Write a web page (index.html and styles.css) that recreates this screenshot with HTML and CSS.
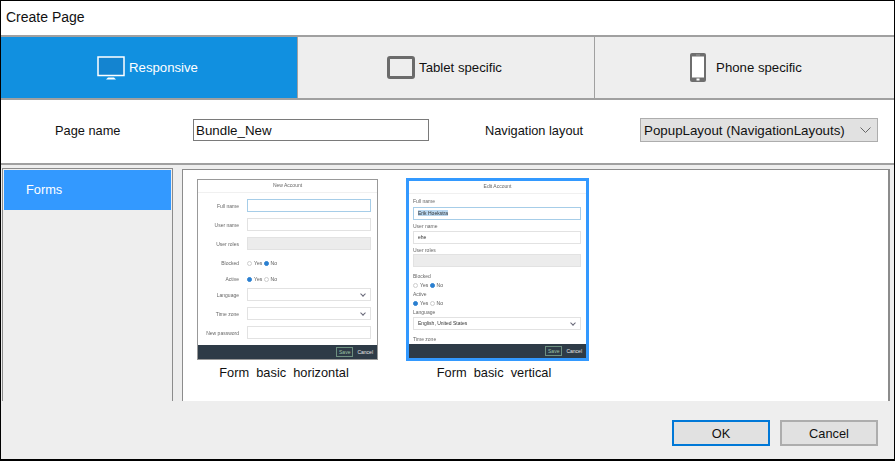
FILE: index.html
```html
<!DOCTYPE html>
<html lang="en">
  <head>
    <meta charset="UTF-8" />
    <meta name="viewport" content="width=device-width, initial-scale=1.0" />
    <title>Create Page</title>
    <link rel="stylesheet" href="styles.css">
  </head>
  <body>
    <div class="dialog">
      <div class="title-bar">Create Page</div>

      <div class="tabs">
        <div class="tab tab-active">
          <svg class="tab-icon" width="28" height="24" viewBox="0 0 28 24">
            <rect x="1" y="1" width="26" height="18.5" fill="#1484d0" stroke="#fff" stroke-width="1.5" />
            <path d="M11 21.5h6l2 2H9z" fill="#fff" />
          </svg>
          <span>Responsive</span>
        </div>
        <div class="tab tab-tablet">
          <svg class="tab-icon" width="28" height="23" viewBox="0 0 28 23">
            <rect x="1.5" y="1.5" width="25" height="20" rx="1.5" fill="none" stroke="#6b6b6b" stroke-width="3" />
          </svg>
          <span>Tablet specific</span>
        </div>
        <div class="tab tab-phone">
          <svg class="tab-icon" width="16" height="29" viewBox="0 0 16 29">
            <rect width="16" height="29" rx="2" fill="#6e6e6e" />
            <rect x="2" y="3.5" width="12" height="21" fill="#fff" />
            <rect x="6" y="1.5" width="4" height="1" fill="#999" />
            <rect x="6.5" y="25.5" width="3" height="2" fill="#fff" />
          </svg>
          <span>Phone specific</span>
        </div>
      </div>

      <div class="name-row">
        <label class="name-label" for="pageName">Page name</label>
        <input class="name-input" id="pageName" type="text" value="Bundle_New" />
        <span class="nav-label">Navigation layout</span>
        <div class="nav-select">
          <span>PopupLayout (NavigationLayouts)</span>
          <svg width="11" height="6" viewBox="0 0 11 6"><path d="M.5.5l5 5 5-5" fill="none" stroke="#666" /></svg>
        </div>
      </div>

      <div class="content">
        <div class="side-list">
          <div class="side-item">Forms</div>
        </div>
        <div class="templates">
          <div class="template">
            <div class="thumb thumb-horizontal">
              <div class="thumb-title">New Account</div>
              <div class="h-form">
                <div class="h-row"><span>Full name</span><i class="fld fld-focus"></i></div>
                <div class="h-row"><span>User name</span><i class="fld"></i></div>
                <div class="h-row"><span>User roles</span><i class="fld fld-off"></i></div>
                <div class="h-row h-radio"><span>Blocked</span><em><b class="dot"></b>Yes <b class="dot dot-on"></b>No</em></div>
                <div class="h-row h-radio"><span>Active</span><em><b class="dot dot-on"></b>Yes <b class="dot"></b>No</em></div>
                <div class="h-row"><span>Language</span><i class="fld fld-drop"></i></div>
                <div class="h-row"><span>Time zone</span><i class="fld fld-drop"></i></div>
                <div class="h-row"><span>New password</span><i class="fld"></i></div>
              </div>
              <div class="thumb-foot"><span class="thumb-save">Save</span><span>Cancel</span></div>
            </div>
            <div class="template-name">Form&nbsp; basic&nbsp; horizontal</div>
          </div>

          <div class="template">
            <div class="thumb thumb-vertical">
              <div class="thumb-title">Edit Account</div>
              <div class="v-form">
                <span class="v-label v-first">Full name</span>
                <i class="fld fld-focus"><u class="fld-select">Erik Hoekstra</u></i>
                <span class="v-label">User name</span>
                <i class="fld">ehe</i>
                <span class="v-label">User roles</span>
                <i class="fld fld-off"></i>
                <span class="v-label v-blocked">Blocked</span>
                <em><b class="dot"></b>Yes <b class="dot dot-on"></b>No</em>
                <span class="v-label v-tight">Active</span>
                <em><b class="dot dot-on"></b>Yes <b class="dot"></b>No</em>
                <span class="v-label v-tight">Language</span>
                <i class="fld fld-drop">English, United States</i>
                <span class="v-label v-last">Time zone</span>
              </div>
              <div class="thumb-foot"><span class="thumb-save">Save</span><span>Cancel</span></div>
            </div>
            <div class="template-name">Form&nbsp; basic&nbsp; vertical</div>
          </div>
        </div>
      </div>

      <div class="footer">
        <button class="btn btn-default">OK</button>
        <button class="btn">Cancel</button>
      </div>
    </div>
  </body>
</html>
```

FILE: styles.css
```css
* {
  box-sizing: border-box;
}
html, body {
  margin: 0;
  height: 100%;
}
body {
  font-family: "Liberation Sans", Arial, sans-serif;
  font-size: 12.8px;
  color: #111;
  overflow: hidden;
}
.dialog {
  width: 895px;
  height: 461px;
  border: 1px solid #000;
  border-bottom-width: 2px;
  display: flex;
  flex-direction: column;
  background: #fff;
}
.title-bar {
  height: 34px;
  padding: 8px 0 0 5px;
  font-size: 14px;
  line-height: 16px;
}

/* tabs */
.tabs {
  display: flex;
  height: 65px;
  border-top: 2px solid #a0a0a0;
  border-bottom: 2px solid #a0a0a0;
}
.tab {
  width: 297px;
  display: flex;
  align-items: center;
  justify-content: center;
  gap: 4px;
  background: #eeeeee;
  border-left: 1px solid #a0a0a0;
  font-size: 13.2px;
}
.tab-active {
  width: 296px;
  background: #1190e0;
  border-left: none;
  color: #fff;
  padding-right: 3px;
}
.tab-tablet {
  padding-right: 3px;
}
.tab-phone {
  flex: 1;
  gap: 10px;
  padding-left: 3px;
}

/* name row */
.name-row {
  height: 65px;
  display: flex;
  align-items: center;
  padding-bottom: 3px;
  border-bottom: 2px solid #a0a0a0;
}
.name-label {
  width: 192px;
  padding: 1px 0 0 54px;
}
.name-input {
  width: 236px;
  height: 22px;
  border: 1px solid #7a7a7a;
  padding: 0 2px;
  font: inherit;
  font-size: 13.33px;
  color: #111;
  outline: none;
}
.nav-label {
  width: 155px;
  margin-left: 56px;
  padding-top: 1px;
}
.nav-select {
  width: 238px;
  height: 24px;
  display: flex;
  align-items: center;
  justify-content: space-between;
  padding: 0 6px 0 3px;
  background: #e1e1e1;
  border: 1px solid #adadad;
  font-size: 13.33px;
}

/* content */
.content {
  height: 236px;
  display: flex;
  background: #eeeeee;
  padding: 3px 0 0 1px;
}
.side-list {
  width: 171px;
  border: 1px solid #8c8c8c;
  border-bottom: none;
  padding: 1px 1px 0;
  background: #eeeeee;
}
.side-item {
  height: 40px;
  padding-left: 22px;
  background: #3399ff;
  color: #fff;
  line-height: 40px;
}
.templates {
  width: 708px;
  margin-left: 9px;
  margin-top: 1px;
  border: 1px solid #8c8c8c;
  border-right-width: 2px;
  border-bottom: none;
  background: #fff;
  display: flex;
  align-items: flex-start;
  padding-top: 8px;
}
.template {
  display: flex;
  flex-direction: column;
  align-items: center;
}
.template:first-child {
  margin: 1px 0 0 14px;
  width: 181px;
}
.template:last-child {
  margin-left: 28px;
  width: 183px;
}
.template-name {
  margin: 5px 7px 0 0;
  line-height: 16px;
}
.template:last-child .template-name {
  margin-top: 4px;
}

/* thumbnails */
.thumb {
  display: flex;
  flex-direction: column;
  width: 100%;
  background: #fff;
  font-size: 5px;
  color: #666;
}
.thumb-horizontal {
  height: 181px;
  border: 1px solid #999;
}
.thumb-vertical {
  height: 183px;
  border: 3px solid #3399ff;
}
.thumb-title {
  height: 13px;
  flex: none;
  line-height: 11px;
  text-align: center;
  border-bottom: 1px solid #f0f0f0;
  filter: blur(.3px);
}
.h-form {
  flex: 1;
  padding-top: 6px;
  filter: blur(.3px);
}
.h-row {
  display: flex;
  align-items: center;
  height: 13px;
  margin-bottom: 6px;
}
.h-row > span {
  width: 41px;
  text-align: right;
  margin-right: 8px;
  white-space: nowrap;
}
.h-row .fld {
  width: 124px;
}
.h-radio {
  margin-bottom: 3px;
}
.fld {
  display: block;
  height: 13px;
  line-height: 11px;
  padding-left: 4px;
  position: relative;
  font-style: normal;
  color: #333;
  background: #fff;
  border: 1px solid #e2e2e2;
}
.fld-focus {
  border-color: #a6cde8;
}
.fld-off {
  background: #ececec;
}
.fld-drop::after {
  content: "";
  position: absolute;
  right: 5px;
  top: 3px;
  width: 3px;
  height: 3px;
  border-right: 1px solid #667;
  border-bottom: 1px solid #667;
  transform: rotate(45deg);
}
.fld-select {
  background: #b9d7f0;
  text-decoration: none;
}
.thumb em {
  display: block;
  font-style: normal;
  height: 8px;
  line-height: 8px;
  color: #555;
}
.dot {
  display: inline-block;
  width: 5px;
  height: 5px;
  margin-right: 2px;
  border: 1px solid #ccc;
  border-radius: 50%;
  vertical-align: -1px;
}
.dot-on {
  background: #2a7fd0;
  border-color: #2a7fd0;
}
.v-form {
  flex: 1;
  min-height: 0;
  padding: 0 5px 0 4px;
  filter: blur(.3px);
}
.v-label {
  display: block;
  height: 7px;
  line-height: 7px;
  margin: 3px 0 .5px;
}
.v-first {
  margin-top: 4px;
  margin-bottom: 2px;
}
.v-blocked {
  margin-top: 6px;
}
.v-tight {
  margin-top: 2.5px;
}
.v-last {
  margin-top: 6.5px;
}
.thumb-foot {
  height: 14px;
  flex: none;
  background: #2e3b47;
  color: #e8e8e8;
  display: flex;
  align-items: center;
  justify-content: flex-end;
  gap: 4px;
  padding-right: 4px;
}
.thumb-save {
  height: 10px;
  line-height: 8px;
  padding: 0 2px;
  color: #9cc4a6;
  border: 1px solid #6d9080;
}

/* footer */
.footer {
  flex: 1;
  display: flex;
  justify-content: flex-end;
  align-items: flex-start;
  gap: 10px;
  padding: 19px 16px 0 0;
  background: #eeeeee;
}
.btn {
  width: 98px;
  height: 26px;
  font: inherit;
  color: #111;
  background: #e1e1e1;
  border: 2px solid #adadad;
  padding: 0;
}
.btn-default {
  border-color: #0078d7;
}
```
